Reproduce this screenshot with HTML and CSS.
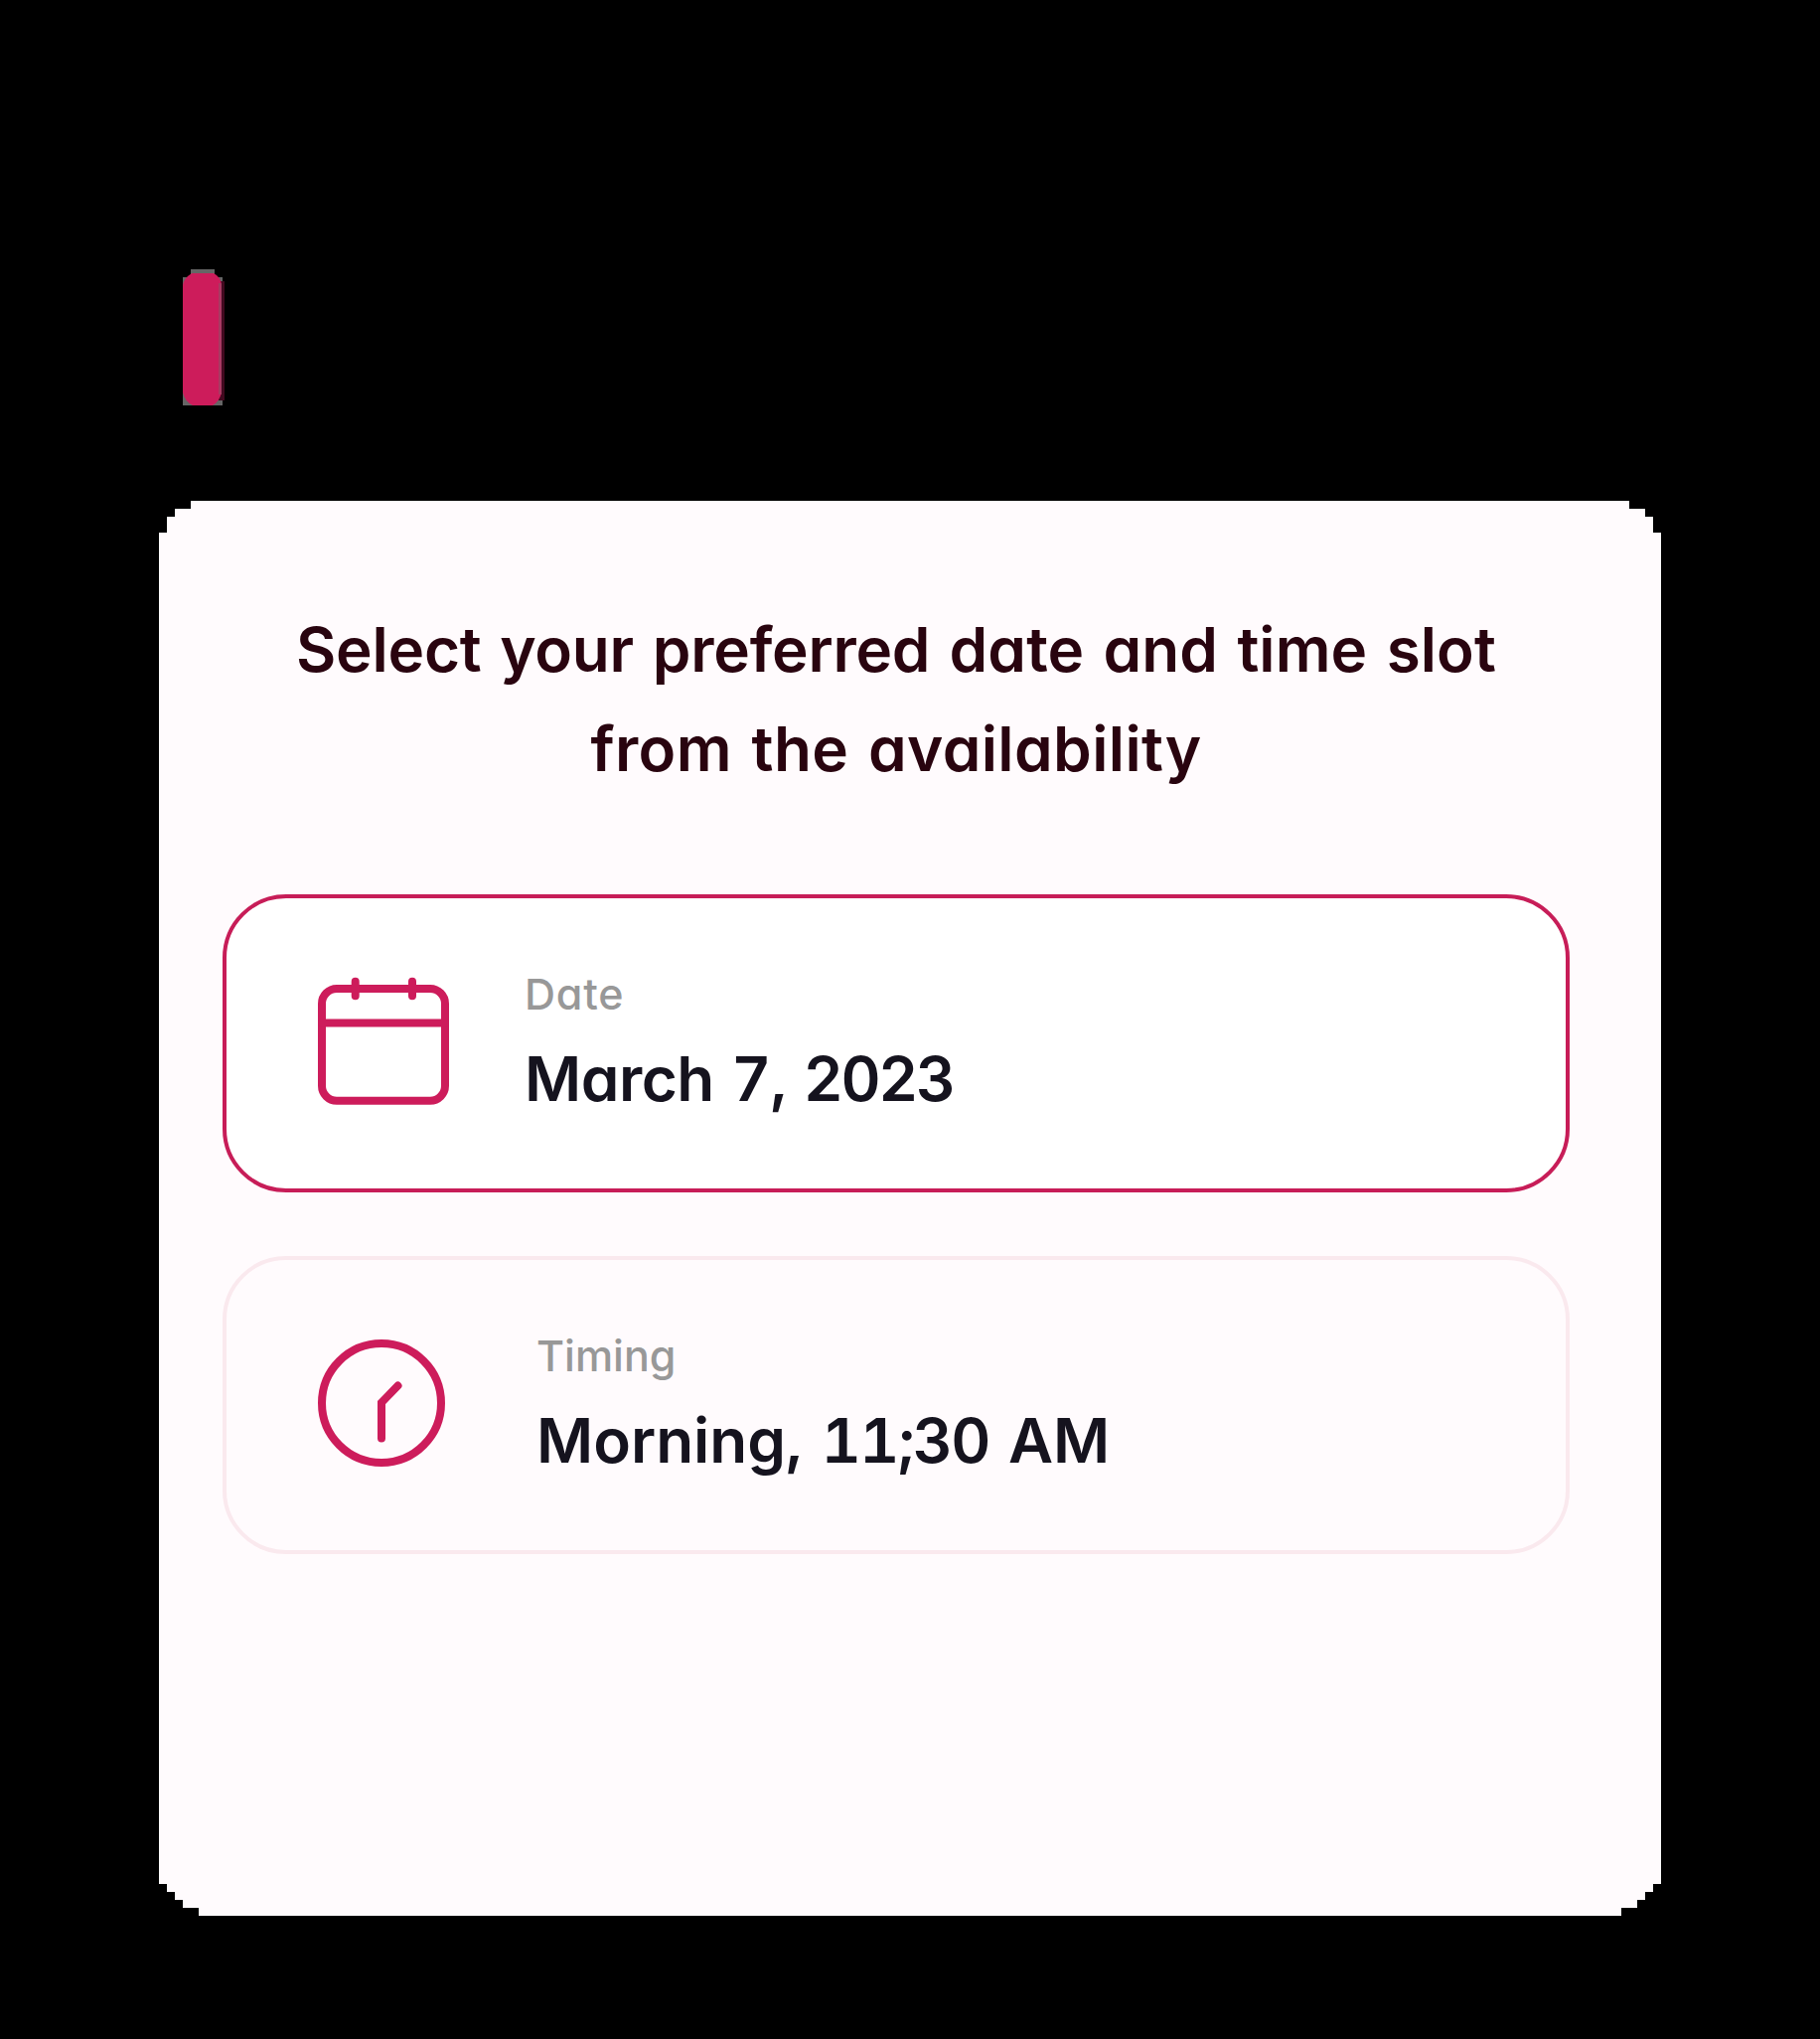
FILE: index.html
```html
<!DOCTYPE html>
<html lang="en">
<head>
<meta charset="utf-8">
<title>Select a slot</title>
<link rel="stylesheet" href="styles.css">
</head>
<body>
<header class="top">
  <svg class="marker" width="44" height="140" viewBox="0 0 44 140" aria-hidden="true">
    <path class="marker-edge" d="M8 0H32V8H40V137H0V8H8Z"/>
    <path class="marker-glow" d="M36 12H42V132H36Z"/>
    <path class="marker-fill" d="M9 4H31Q39 8 39 17V124Q37 133 30 137H10Q2 133 0 124V16Q1 9 9 4Z"/>
    <path class="marker-shade" d="M36 14H39V126H36Z"/>
  </svg>
</header>
<main class="panel">
  <h1 class="title"><span class="line first"><span class="lead">Select your preferred</span> date and time slot</span><span class="line second">from the availability</span></h1>
  <section class="option selected">
    <svg class="icon calendar" width="132" height="132" viewBox="0 0 132 132" aria-hidden="true">
      <rect x="4" y="15" width="124" height="112.7" rx="15"/>
      <path d="M4 49.5H128M37.7 7.8V22.2M95 7.8V22.2"/>
    </svg>
    <div class="details">
      <span class="label date-label">Date</span>
      <span class="value date-value">March <span class="day">7,</span> <span class="year">2023</span></span>
    </div>
  </section>
  <section class="option">
    <svg class="icon clock" width="128" height="128" viewBox="0 0 128 128" aria-hidden="true">
      <circle cx="64" cy="64" r="60"/>
      <path d="M80.5 46.5L64 63.5V99.5"/>
    </svg>
    <div class="details">
      <span class="label time-label">Timing</span>
      <span class="value time-value">Morning, <span class="hour">11;30</span> AM</span>
    </div>
  </section>
</main>
</body>
</html>
```
FILE: styles.css
```css
* { box-sizing: border-box; }
body {
  margin: 0;
  width: 1832px;
  height: 2052px;
  background: #000;
  font-family: Inter, "Open Sans", sans-serif;
  font-feature-settings: "cv11", "tnum";
}
.top { height: 504px; padding: 271px 0 0 184px; }
.marker { display: block; }
.marker-edge { fill: #656565; }
.marker-glow { fill: #42091f; }
.marker-fill { fill: #cd1c5b; }
.marker-shade { fill: #a83a62; }
.panel {
  width: 1512px;
  height: 1424px;
  margin-left: 160px;
  padding: 100px 92px 0 64px;
  background: #fffbfd;
  display: flex;
  flex-direction: column;
  clip-path: polygon(32px 0, 1480px 0, 1480px 8px, 1496px 8px, 1496px 16px, 1504px 16px, 1504px 32px, 1512px 32px, 1512px 1392px, 1504px 1392px, 1504px 1400px, 1496px 1400px, 1496px 1408px, 1488px 1408px, 1488px 1416px, 1472px 1416px, 1472px 1424px, 40px 1424px, 40px 1416px, 24px 1416px, 24px 1408px, 16px 1408px, 16px 1400px, 8px 1400px, 8px 1392px, 0 1392px, 0 32px, 8px 32px, 8px 16px, 16px 16px, 16px 8px, 32px 8px);
}
.title {
  margin: 0 0 96px;
  font-size: 62px;
  font-weight: 600;
  line-height: 100px;
  color: #29040f;
  text-align: center;
  word-spacing: 2.5px;
}
.line { display: block; white-space: nowrap; }
.lead { letter-spacing: -0.25px; }
.first { letter-spacing: 0.1px; }
.second { letter-spacing: 0.4px; }
.option {
  height: 300px;
  margin-bottom: 64px;
  padding: 76px 92px 0;
  border: 4px solid #fae9ee;
  border-radius: 64px;
  display: flex;
}
.selected { background: #fff; border-color: #c71d58; }
.icon { flex: none; fill: none; stroke: #cd1c5b; stroke-width: 8; stroke-linecap: round; }
.clock { margin-top: 4px; }
.details { display: flex; flex-direction: column; margin: -12px 0 0 76px; }
.clock + .details { margin-left: 92px; }
.label { margin-bottom: 4px; font-size: 43px; font-weight: 500; line-height: 64px; color: #989898; white-space: nowrap; align-self: flex-start; }
.date-label { letter-spacing: 0.8px; }
.value { font-size: 62px; font-weight: 600; line-height: 100px; color: #15131e; white-space: nowrap; align-self: flex-start; }
.date-value { letter-spacing: -0.5px; word-spacing: 1.5px; }
.day { letter-spacing: -1px; }
.year { letter-spacing: -2.4px; }
.time-value { word-spacing: 2.4px; }
.hour { letter-spacing: -1.6px; }
```
